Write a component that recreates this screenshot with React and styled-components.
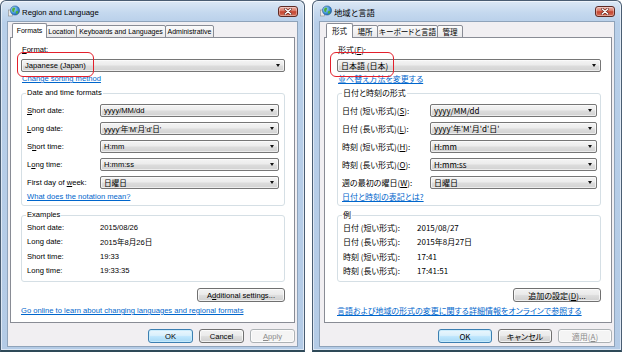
import React from "react";
import styled, { createGlobalStyle } from "styled-components";

const GlobalStyle = createGlobalStyle`
  html, body { margin: 0; padding: 0; background: #ffffff; }
  body { width: 622px; height: 352px; overflow: hidden; }
  * { box-sizing: border-box; }
`;

const Desktop = styled.div`
  display: flex;
  gap: 7px;
  width: 622px;
  height: 352px;
`;

const Window = styled.div`
  width: ${(p) => p.$w}px;
  height: 352px;
  flex: none;
  display: flex;
  flex-direction: column;
  border: 1px solid #4a5d72;
  border-bottom: 2px solid #2e4a58;
  border-radius: 6px 6px 0 0;
  padding: 0 6px 4px 6px;
  background: linear-gradient(180deg, #dce8f5 0px, #c4d8ee 12px, #b8cfe9 22px, #b4cbe6 100%);
  box-shadow: inset 0 0 0 1px rgba(255, 255, 255, 0.55);
  font-family: ${(p) => p.$font};
  font-size: ${(p) => p.$size}px;
  font-feature-settings: ${(p) => (p.$palt ? '"palt"' : "normal")};
  color: #000;
`;

const TitleBar = styled.div`
  height: 20px;
  flex: none;
  display: flex;
  align-items: center;
  gap: 2px;
  padding-left: 1px;
`;

const TitleText = styled.span`
  font-size: ${(p) => p.$size}px;
  color: #000;
  white-space: nowrap;
  padding-top: 2px;
`;

const CloseBtn = styled.div`
  margin-left: auto;
  margin-top: 1px;
  width: 20px;
  height: 11px;
  border: 1px solid #5e2a24;
  border-radius: 3px;
  background: linear-gradient(180deg, #eab1a6 0%, #d97866 45%, #c4432f 52%, #d4705a 100%);
  display: flex;
  align-items: center;
  justify-content: center;
  box-shadow: inset 0 0 0 1px rgba(255, 255, 255, 0.35);
`;

const Client = styled.div`
  flex: 1;
  display: flex;
  flex-direction: column;
  background: #f1eff2;
  border: 1px solid #8fa3ba;
  padding: ${(p) => p.$pad};
`;

const TabRow = styled.div`
  display: flex;
  align-items: flex-end;
  height: 15px;
  padding-left: 2px;
  margin-bottom: -1px;
  position: relative;
  z-index: 1;
`;

const Tab = styled.div`
  width: ${(p) => p.$w}px;
  height: ${(p) => (p.$active ? 15 : 13)}px;
  margin-left: ${(p) => (p.$first ? 0 : -1)}px;
  border: 1px solid #898c95;
  border-bottom: ${(p) => (p.$active ? "none" : "1px solid #898c95")};
  border-radius: 2px 2px 0 0;
  background: ${(p) => (p.$active ? "#ffffff" : "linear-gradient(180deg, #fbfbfb, #e9e9eb)")};
  display: flex;
  align-items: center;
  justify-content: center;
  padding-bottom: ${(p) => (p.$active ? 2 : 0)}px;
  font-size: ${(p) => p.$fs}px;
  white-space: nowrap;
  position: relative;
  z-index: ${(p) => (p.$active ? 2 : 1)};
`;

const Panel = styled.div`
  height: 286px;
  flex: none;
  background: #ffffff;
  border: 1px solid #898c95;
  padding: ${(p) => p.$pad};
  display: flex;
  flex-direction: column;
`;

const Text = styled.div`
  height: 10px;
  line-height: 10px;
  white-space: nowrap;
  margin-top: ${(p) => p.$mt || 0}px;
  margin-left: ${(p) => p.$ml || 0}px;
`;

const LinkText = styled(Text)`
  color: #0066cc;
  text-decoration: underline;
`;

const ComboWrap = styled.div`
  position: relative;
  margin-top: ${(p) => p.$mt || 0}px;
  flex: ${(p) => (p.$fixed ? "none" : "1")};
  display: flex;
`;

const Combo = styled.div`
  flex: 1;
  height: 13px;
  border: 1px solid #767676;
  border-radius: 2px;
  background: linear-gradient(180deg, #f4f4f4 0%, #ececec 45%, #dcdcdc 55%, #d2d2d2 100%);
  display: flex;
  align-items: center;
  padding-left: 3px;
  white-space: nowrap;
  box-shadow: inset 0 0 0 1px rgba(255, 255, 255, 0.6);
`;

const Arrow = styled.span`
  margin-left: auto;
  margin-right: 4px;
  width: 0;
  height: 0;
  border-left: 2.5px solid transparent;
  border-right: 2.5px solid transparent;
  border-top: 3px solid #111;
`;

const Highlight = styled.div`
  position: absolute;
  left: ${(p) => p.$l}px;
  top: -7px;
  width: ${(p) => p.$w}px;
  height: 25px;
  border: 1.5px solid #e3202c;
  border-radius: 6px;
  pointer-events: none;
`;

const Group = styled.div`
  position: relative;
  margin-top: ${(p) => p.$mt}px;
  height: ${(p) => p.$h}px;
  flex: none;
  border: 1px solid #d5dfe5;
  border-radius: 3px;
  padding: ${(p) => p.$pad};
  display: flex;
  flex-direction: column;
`;

const Legend = styled.span`
  position: absolute;
  top: -6px;
  left: 4px;
  padding: 0 1px;
  background: #ffffff;
  line-height: 10px;
  white-space: nowrap;
`;

const Row = styled.div`
  display: flex;
  align-items: center;
  height: ${(p) => p.$h}px;
  flex: none;
`;

const RowLabel = styled.div`
  width: ${(p) => p.$w}px;
  flex: none;
  white-space: nowrap;
`;

const Value = styled.div`
  white-space: nowrap;
`;

const RightAlign = styled.div`
  display: flex;
  justify-content: flex-end;
  gap: ${(p) => p.$gap || 0}px;
  margin-top: ${(p) => p.$mt || 0}px;
`;

const Button = styled.div`
  width: ${(p) => p.$w}px;
  height: 14px;
  flex: none;
  border: 1px solid ${(p) => (p.$default ? "#3c7fb1" : p.$disabled ? "#adb2b5" : "#707070")};
  border-radius: 3px;
  background: ${(p) =>
    p.$disabled
      ? "#f4f4f4"
      : p.$default
      ? "linear-gradient(180deg, #eaf6fd 0%, #d9f0fc 45%, #bee6fd 55%, #a7d9f5 100%)"
      : "linear-gradient(180deg, #f2f2f2 0%, #ebebeb 45%, #dddddd 55%, #cfcfcf 100%)"};
  box-shadow: inset 0 0 0 1px ${(p) => (p.$default ? "rgba(200,235,252,0.9)" : "rgba(255,255,255,0.7)")};
  color: ${(p) => (p.$disabled ? "#8a8a8a" : "#000")};
  display: flex;
  align-items: center;
  justify-content: center;
  white-space: nowrap;
`;

const Key = styled.span`
  text-decoration: underline;
`;

function Acc({ text }) {
  const i = text.indexOf("&");
  if (i < 0) return <>{text}</>;
  return (
    <>
      {text.slice(0, i)}
      <Key>{text[i + 1]}</Key>
      {text.slice(i + 2)}
    </>
  );
}

function GlobeIcon() {
  return (
    <svg width="12" height="12" viewBox="0 0 12 12">
      <defs>
        <radialGradient id="gl" cx="0.35" cy="0.35" r="0.75">
          <stop offset="0" stopColor="#bfe6fb" />
          <stop offset="0.6" stopColor="#3a8fd6" />
          <stop offset="1" stopColor="#1b5ea8" />
        </radialGradient>
      </defs>
      <rect x="0.5" y="5" width="4" height="6" fill="#e8e8e8" stroke="#8a8a8a" strokeWidth="0.6" />
      <circle cx="7" cy="5.5" r="4.6" fill="url(#gl)" stroke="#1c4f8a" strokeWidth="0.5" />
      <path d="M4.5 3.2 C5.5 2.2 6.8 2.4 7.2 3.4 C7.4 4.4 6.2 4.6 6.4 5.8 C6.6 7 5.2 7.4 4.6 6.4 C3.9 5.4 3.9 4 4.5 3.2 Z" fill="#4caf3c" />
      <path d="M8.3 6.2 C9.2 5.8 10.4 6.4 10.2 7.4 C9.8 8.6 8.6 9.2 8.1 8.4 C7.7 7.7 7.6 6.6 8.3 6.2 Z" fill="#4caf3c" />
    </svg>
  );
}

function CloseX() {
  return (
    <svg width="8" height="7" viewBox="0 0 8 7">
      <path d="M1.2 1 L6.8 6 M6.8 1 L1.2 6" stroke="#5a1d16" strokeWidth="2.4" strokeLinecap="round" />
      <path d="M1.2 1 L6.8 6 M6.8 1 L1.2 6" stroke="#ffffff" strokeWidth="1.4" strokeLinecap="round" />
    </svg>
  );
}

const dialogs = [
  {
    w: 305,
    font: '"Liberation Sans", "Noto Sans CJK JP", sans-serif',
    size: 7.6,
    titleSize: 7.8,
    tabSize: 7,
    palt: false,
    title: "Region and Language",
    clientPad: "1px 2px 3px 2px",
    panelPad: "7px 9px 0 10px",
    tabs: [
      { t: "Formats", w: 35 },
      { t: "Location", w: 31 },
      { t: "Keyboards and Languages", w: 90 },
      { t: "Administrative", w: 49 },
    ],
    formatLabel: "&Format:",
    formatValue: "Japanese (Japan)",
    hl: { l: -4, w: 77 },
    sortLink: "Change sorting method",
    group1: "Date and time formats",
    labelW: 73,
    exW: 73,
    groupPad: "7px 5px 0 5px",
    rows: [
      ["&Short date:", "yyyy/MM/dd"],
      ["&Long date:", "yyyy'年'M'月'd'日'"],
      ["S&hort time:", "H:mm"],
      ["L&ong time:", "H:mm:ss"],
      ["First day of &week:", "日曜日"],
    ],
    notation: "What does the notation mean?",
    group2: "Examples",
    examples: [
      ["Short date:", "2015/08/26"],
      ["Long date:", "2015年8月26日"],
      ["Short time:", "19:33"],
      ["Long time:", "19:33:35"],
    ],
    additional: "A&dditional settings...",
    online: "Go online to learn about changing languages and regional formats",
    btnW: 45,
    btnGap: 6,
    buttons: [
      { t: "OK", d: true },
      { t: "Cancel" },
      { t: "&Apply", x: true },
    ],
  },
  {
    w: 310,
    font: '"Noto Sans CJK JP", "DejaVu Sans", sans-serif',
    size: 8,
    titleSize: 8.4,
    tabSize: 7.6,
    palt: true,
    title: "地域と言語",
    clientPad: "1px 2px 3px 4px",
    panelPad: "7px 10px 0 12px",
    tabs: [
      { t: "形式", w: 27 },
      { t: "場所", w: 26 },
      { t: "キーボードと言語", w: 61 },
      { t: "管理", w: 26 },
    ],
    formatLabel: "形式(&F):",
    formatValue: "日本語 (日本)",
    hl: { l: -7, w: 64 },
    sortLink: "並べ替え方法を変更する",
    group1: "日付と時刻の形式",
    labelW: 88,
    exW: 74,
    groupPad: "7px 3px 0 4px",
    rows: [
      ["日付 (短い形式)(&S):", "yyyy/MM/dd"],
      ["日付 (長い形式)(&L):", "yyyy'年'M'月'd'日'"],
      ["時刻 (短い形式)(&H):", "H:mm"],
      ["時刻 (長い形式)(&O):", "H:mm:ss"],
      ["週の最初の曜日(&W):", "日曜日"],
    ],
    notation: "日付と時刻の表記とは?",
    group2: "例",
    examples: [
      ["日付 (短い形式):", "2015/08/27"],
      ["日付 (長い形式):", "2015年8月27日"],
      ["時刻 (短い形式):", "17:41"],
      ["時刻 (長い形式):", "17:41:51"],
    ],
    additional: "追加の設定(&D)...",
    online: "言語および地域の形式の変更に関する詳細情報をオンラインで参照する",
    btnW: 54,
    btnGap: 6,
    buttons: [
      { t: "OK", d: true },
      { t: "キャンセル" },
      { t: "適用(&A)", x: true },
    ],
  },
];

function Dialog({ d }) {
  return (
    <Window $w={d.w} $font={d.font} $size={d.size} $palt={d.palt}>
      <TitleBar>
        <GlobeIcon />
        <TitleText $size={d.titleSize}>{d.title}</TitleText>
        <CloseBtn>
          <CloseX />
        </CloseBtn>
      </TitleBar>
      <Client $pad={d.clientPad}>
        <TabRow>
          {d.tabs.map((t, i) => (
            <Tab key={t.t} $w={t.w} $fs={d.tabSize} $active={i === 0} $first={i === 0}>
              {t.t}
            </Tab>
          ))}
        </TabRow>
        <Panel $pad={d.panelPad}>
          <Text $ml={1}>
            <Acc text={d.formatLabel} />
          </Text>
          <ComboWrap $mt={4} $fixed>
            <Combo>
              {d.formatValue}
              <Arrow />
            </Combo>
            <Highlight $l={d.hl.l} $w={d.hl.w} />
          </ComboWrap>
          <LinkText $mt={2} $ml={1}>{d.sortLink}</LinkText>
          <Group $mt={9} $h={113} $pad={d.groupPad}>
            <Legend>{d.group1}</Legend>
            {d.rows.map(([l, v]) => (
              <Row key={l} $h={18}>
                <RowLabel $w={d.labelW}>
                  <Acc text={l} />
                </RowLabel>
                <ComboWrap>
                  <Combo>
                    {v}
                    <Arrow />
                  </Combo>
                </ComboWrap>
              </Row>
            ))}
            <LinkText $mt={1}>{d.notation}</LinkText>
          </Group>
          <Group $mt={9} $h={67} $pad={"4px 5px 0 5px"}>
            <Legend>{d.group2}</Legend>
            {d.examples.map(([l, v]) => (
              <Row key={l} $h={14.5}>
                <RowLabel $w={d.exW}>{l}</RowLabel>
                <Value>{v}</Value>
              </Row>
            ))}
          </Group>
          <RightAlign $mt={6}>
            <Button $w={88}>
              <Acc text={d.additional} />
            </Button>
          </RightAlign>
          <LinkText $mt={4}>{d.online}</LinkText>
        </Panel>
        <RightAlign $mt={6} $gap={d.btnGap}>
          {d.buttons.map((b) => (
            <Button key={b.t} $w={d.btnW} $default={b.d} $disabled={b.x}>
              <Acc text={b.t} />
            </Button>
          ))}
        </RightAlign>
      </Client>
    </Window>
  );
}

export default function App() {
  return (
    <>
      <GlobalStyle />
      <Desktop>
        {dialogs.map((d) => (
          <Dialog key={d.title} d={d} />
        ))}
      </Desktop>
    </>
  );
}
